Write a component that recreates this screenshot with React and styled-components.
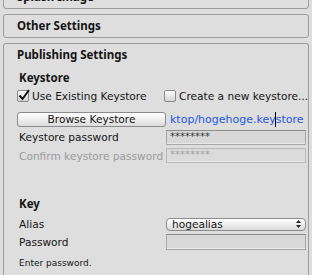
import React, { useState } from "react";
import styled, { createGlobalStyle } from "styled-components";

const GlobalStyle = createGlobalStyle`
  html, body {
    margin: 0;
    background: #dedede;
    overflow: hidden;
  }
  body {
    font-family: "DejaVu Sans", "Liberation Sans", sans-serif;
    font-size: 10.6px;
    color: #141414;
  }
`;

const Inspector = styled.div`
  display: flex;
  flex-direction: column;
  gap: 5px;
  padding: 0 3px;
  margin-top: -15px;
`;

const Foldout = styled.div`
  border: 1px solid #9c9c9c;
  border-radius: 3px;
  background: #dedede;
  ${(p) => p.$open && "border-bottom: none; border-radius: 3px 3px 0 0; min-height: 260px;"}
`;

const FoldoutTitle = styled.div`
  height: 22px;
  line-height: 22px;
  padding-left: 13px;
  font-family: "Noto Sans", "DejaVu Sans", sans-serif;
  font-size: 11.5px;
  font-weight: bold;
`;

const Body = styled.div`
  padding: 0 2px 0 14px;
`;

const SectionLabel = styled.div`
  height: 18px;
  line-height: 18px;
  margin-top: ${(p) => p.$top || 0}px;
  padding-left: 1px;
  font-family: "Noto Sans", "DejaVu Sans", sans-serif;
  font-size: 11.5px;
  font-weight: bold;
`;

const Row = styled.div`
  display: grid;
  grid-template-columns: 148px 1fr;
  align-items: center;
  height: ${(p) => p.$h || 18}px;
  margin-top: ${(p) => p.$top || 0}px;
`;

const Label = styled.span`
  padding-left: 1px;
  white-space: nowrap;
  color: ${(p) => (p.$disabled ? "#9b9b9b" : "inherit")};
`;

const CheckLabel = styled.label`
  display: flex;
  align-items: center;
  gap: 3px;
  white-space: nowrap;
  cursor: default;
  margin-left: ${(p) => p.$shift || 0}px;
`;

const Box = styled.span`
  position: relative;
  width: 10px;
  height: 10px;
  border: 1px solid #8a8a8a;
  border-radius: 2px;
  background: linear-gradient(#fdfdfd, #d4d4d4);
  flex: none;
`;

const Tick = styled.svg`
  position: absolute;
  left: 0;
  top: -2px;
`;

const Button = styled.button`
  height: 15px;
  width: 149px;
  margin-left: -1px;
  padding: 0;
  border: 1px solid #8b8b8b;
  border-radius: 3px;
  background: linear-gradient(#ffffff, #f0f0f0 45%, #dcdcdc);
  font: inherit;
  color: #141414;
  line-height: 13px;
`;

const PathField = styled.div`
  overflow: hidden;
  white-space: nowrap;
  color: #2457e0;
  padding-left: 4px;
  font-size: 11px;
`;

const Caret = styled.span`
  display: inline-block;
  width: 1px;
  height: 15px;
  background: #000;
  vertical-align: middle;
  margin: 0 -0.5px;
`;

const Field = styled.div`
  height: ${(p) => p.$h || 15}px;
  box-sizing: border-box;
  border: 1px solid #a8a8a8;
  border-top-color: #8c8c8c;
  box-shadow: inset 0 -1px 0 #e9e9e9;
  background: #d8d8d8;
  padding-left: 3px;
  font-size: 10px;
  line-height: 12px;
  color: ${(p) => (p.$disabled ? "#a4a4a4" : "#3a3a3a")};
  ${(p) => p.$disabled && "border-color: #b9b9b9; background: #dbdbdb;"}
`;

const Popup = styled.div`
  height: 13px;
  box-sizing: border-box;
  border: 1px solid #8b8b8b;
  border-radius: 4px;
  background: linear-gradient(#ffffff, #eeeeee 50%, #d9d9d9);
  display: flex;
  align-items: center;
  justify-content: space-between;
  padding: 0 4px 0 5px;
  line-height: 11px;
`;

const Hint = styled.div`
  height: 18px;
  line-height: 18px;
  margin-top: 3px;
  padding-left: 1px;
  font-size: 9px;
`;

const Check = ({ checked, children, onChange, shift }) => (
  <CheckLabel onClick={onChange} $shift={shift}>
    <Box>
      {checked && (
        <Tick width="12" height="12" viewBox="0 0 12 12">
          <path d="M1.5 6.5 L4.5 10 L11 1" fill="none" stroke="#111" strokeWidth="2" />
        </Tick>
      )}
    </Box>
    {children}
  </CheckLabel>
);

const App = () => {
  const [useExisting, setUseExisting] = useState(true);

  return (
    <>
      <GlobalStyle />
      <Inspector>
        <Foldout>
          <FoldoutTitle>Splash Image</FoldoutTitle>
        </Foldout>
        <Foldout>
          <FoldoutTitle>Other Settings</FoldoutTitle>
        </Foldout>
        <Foldout $open>
          <FoldoutTitle>Publishing Settings</FoldoutTitle>
          <Body>
            <SectionLabel $top={3}>Keystore</SectionLabel>
            <Row $top={0}>
              <Check checked={useExisting} shift={-1} onChange={() => setUseExisting(true)}>
                Use Existing Keystore
              </Check>
              <Check checked={!useExisting} shift={-2} onChange={() => setUseExisting(false)}>
                Create a new keystore...
              </Check>
            </Row>
            <Row $top={7} $h={15}>
              <Button>Browse Keystore</Button>
              <PathField>
                ktop/hogehoge.key<Caret />store
              </PathField>
            </Row>
            <Row $top={1} $h={18}>
              <Label>Keystore password</Label>
              <Field>********</Field>
            </Row>
            <Row $h={19}>
              <Label $disabled>Confirm keystore password</Label>
              <Field $disabled>********</Field>
            </Row>
            <SectionLabel $top={30}>Key</SectionLabel>
            <Row $top={2}>
              <Label>Alias</Label>
              <Popup>
                hogealias
                <svg width="5" height="8" viewBox="0 0 5 8">
                  <path d="M2.5 0 L5 3 L0 3 Z M2.5 8 L5 5 L0 5 Z" fill="#222" />
                </svg>
              </Popup>
            </Row>
            <Row>
              <Label>Password</Label>
              <Field $h={16} />
            </Row>
            <Hint>Enter password.</Hint>
          </Body>
        </Foldout>
      </Inspector>
    </>
  );
};

export default App;
